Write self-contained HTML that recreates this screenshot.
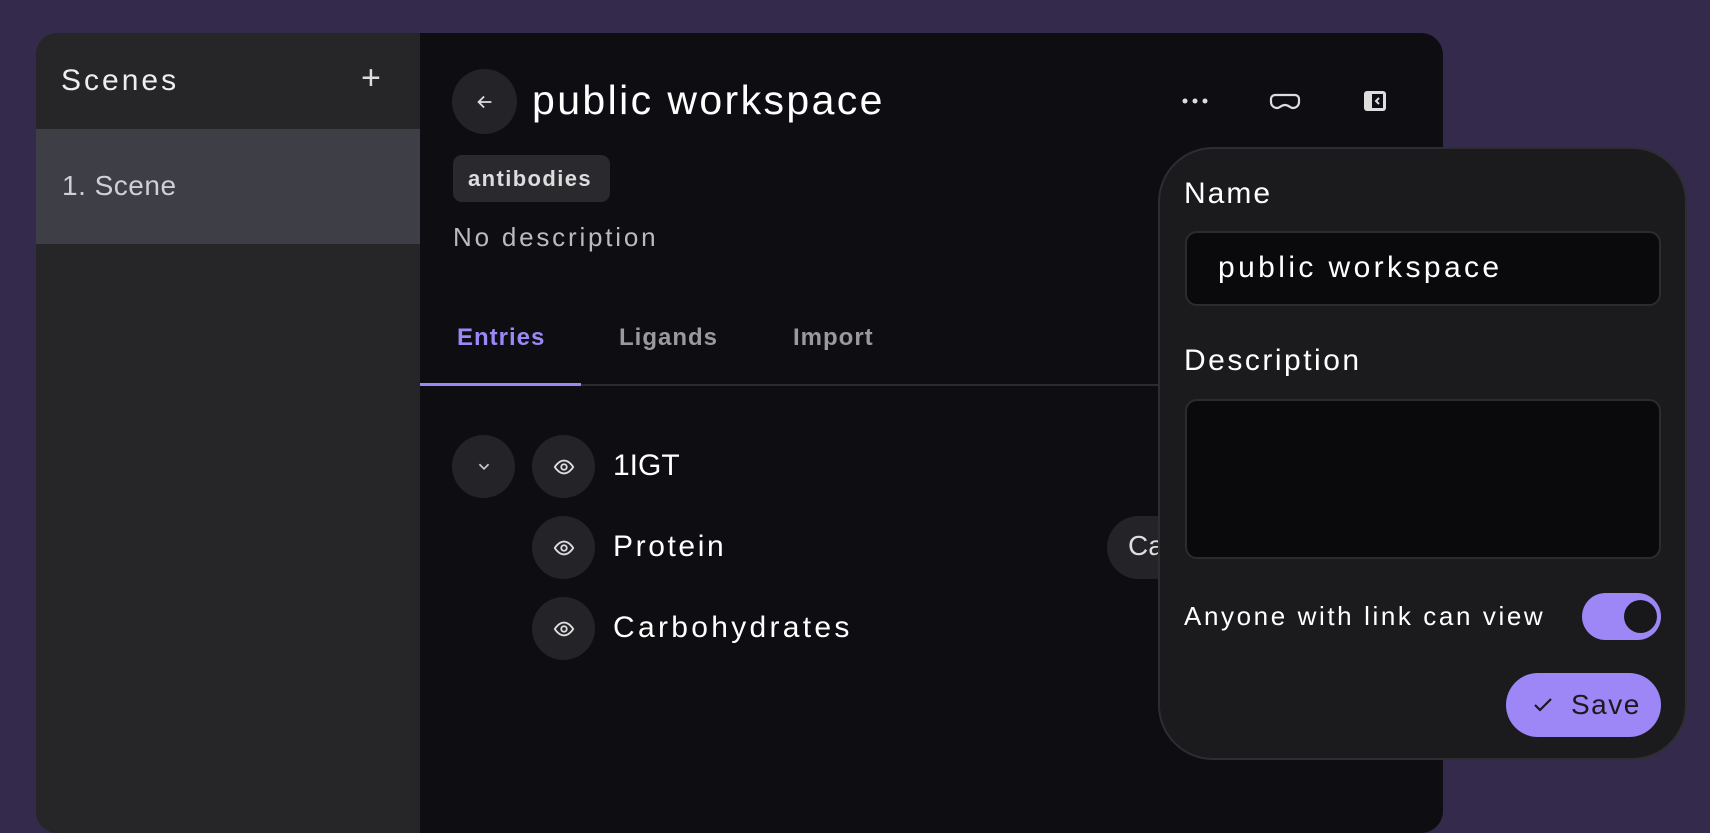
<!DOCTYPE html>
<html><head><meta charset="utf-8"><style>
*{box-sizing:border-box;margin:0;padding:0}
body{width:1710px;height:776px;overflow:hidden;background:#342b4c;font-family:"Liberation Sans",sans-serif;position:relative}
.abs{position:absolute}
.win{left:36px;top:33px;width:1407px;height:800px;border-radius:22px;overflow:hidden;background:#0d0d12}
.side{left:0;top:0;width:384px;height:100%;background:#262628}
.circ{position:absolute;border-radius:50%;background:#242428;display:flex;align-items:center;justify-content:center}
.t{position:absolute;white-space:nowrap}
</style></head><body>
<div class="abs win">
  <div class="abs side">
    <div class="t" style="left:25px;top:31px;font-size:30px;color:#eee;letter-spacing:3px">Scenes</div>
    <div class="t" style="left:325px;top:26px;font-size:34px;color:#ddd;font-weight:300">+</div>
    <div class="abs" style="left:0;top:96px;width:384px;height:115px;background:#3e3e46"></div>
    <div class="t" style="left:26px;top:137px;font-size:28px;color:#d0d0d4;letter-spacing:0.5px">1. Scene</div>
  </div>
  <div class="circ" style="left:416px;top:36px;width:65px;height:65px"><svg width="22" height="22" viewBox="0 0 24 24" fill="none" stroke="#ddd" stroke-width="2"><path d="M19 12H5M11 6l-6 6 6 6"/></svg></div>
  <div class="t" style="left:496px;top:44px;font-size:41px;color:#fff;font-weight:500;letter-spacing:2.4px">public workspace</div>
  <svg class="abs" style="left:1145px;top:63px" width="28" height="10"><circle cx="4" cy="5" r="2.5" fill="#ddd"/><circle cx="14" cy="5" r="2.5" fill="#ddd"/><circle cx="24" cy="5" r="2.5" fill="#ddd"/></svg>
  <svg class="abs" style="left:1233px;top:60px" width="32" height="18" viewBox="0 0 32 18"><path d="M6 2h20a4 4 0 0 1 4 4v3a6 6 0 0 1-6 6c-3 0-4-3-8-3s-5 3-8 3a6 6 0 0 1-6-6V6a4 4 0 0 1 4-4z" fill="none" stroke="#ddd" stroke-width="2.2"/></svg>
  <svg class="abs" style="left:1327px;top:57px" width="24" height="22" viewBox="0 0 24 22"><rect x="1" y="1" width="22" height="20" rx="3" fill="#ddd"/><rect x="9" y="4" width="11" height="14" fill="#0d0d12"/><path d="M16 8l-3 3 3 3" stroke="#ddd" stroke-width="2" fill="none"/></svg>
  <div class="abs" style="left:417px;top:122px;width:157px;height:47px;border-radius:9px;background:#2a2a2e"></div>
  <div class="t" style="left:432px;top:133px;font-size:22px;color:#ddd;font-weight:bold;letter-spacing:1.4px">antibodies</div>
  <div class="t" style="left:417px;top:189px;font-size:26px;color:#bbb;letter-spacing:2.8px">No description</div>
  <div class="t" style="left:421px;top:291px;font-size:24px;color:#9b87f5;font-weight:bold;letter-spacing:1px">Entries</div>
  <div class="t" style="left:583px;top:291px;font-size:24px;color:#9a9a9e;font-weight:bold;letter-spacing:1px">Ligands</div>
  <div class="t" style="left:757px;top:291px;font-size:24px;color:#9a9a9e;font-weight:bold;letter-spacing:1px">Import</div>
  <div class="abs" style="left:384px;top:351px;width:1100px;height:2px;background:#2c2c30"></div>
  <div class="abs" style="left:384px;top:350px;width:161px;height:3px;background:#9b87f5"></div>
  <div class="circ" style="left:416px;top:402px;width:63px;height:63px"><svg width="22" height="22" viewBox="0 0 24 24" fill="none" stroke="#ccc" stroke-width="1.8"><path d="M7 9l5 5 5-5"/></svg></div>
  <div class="circ" style="left:496px;top:402px;width:63px;height:63px"><svg width="22" height="22" viewBox="0 0 24 24" fill="none" stroke="#ddd" stroke-width="2"><path d="M2 12s4-7 10-7 10 7 10 7-4 7-10 7S2 12 2 12z"/><circle cx="12" cy="12" r="3"/></svg></div>
  <div class="t" style="left:577px;top:416px;font-size:30px;color:#fff">1IGT</div>
  <div class="circ" style="left:496px;top:483px;width:63px;height:63px"><svg width="22" height="22" viewBox="0 0 24 24" fill="none" stroke="#ddd" stroke-width="2"><path d="M2 12s4-7 10-7 10 7 10 7-4 7-10 7S2 12 2 12z"/><circle cx="12" cy="12" r="3"/></svg></div>
  <div class="t" style="left:577px;top:497px;font-size:30px;color:#fff;letter-spacing:2.6px">Protein</div>
  <div class="circ" style="left:496px;top:564px;width:63px;height:63px"><svg width="22" height="22" viewBox="0 0 24 24" fill="none" stroke="#ddd" stroke-width="2"><path d="M2 12s4-7 10-7 10 7 10 7-4 7-10 7S2 12 2 12z"/><circle cx="12" cy="12" r="3"/></svg></div>
  <div class="t" style="left:577px;top:578px;font-size:30px;color:#fff;letter-spacing:3.3px">Carbohydrates</div>
  <div class="abs" style="left:1071px;top:483px;width:160px;height:63px;border-radius:32px;background:#242428"></div>
  <div class="t" style="left:1092px;top:497px;font-size:28px;color:#ddd">Ca</div>
</div>
<div class="abs" style="left:1158px;top:147px;width:529px;height:613px;border-radius:55px;background:#1b1b1e;border:2px solid #2e2e32"></div>
<div class="t" style="left:1184px;top:177px;font-size:30px;color:#fff;letter-spacing:2px">Name</div>
<div class="abs" style="left:1185px;top:231px;width:476px;height:75px;border-radius:12px;background:#0a0a0c;border:2px solid #2c2c30"></div>
<div class="t" style="left:1218px;top:251px;font-size:30px;color:#fff;letter-spacing:3.4px">public workspace</div>
<div class="t" style="left:1184px;top:344px;font-size:30px;color:#fff;letter-spacing:2.5px">Description</div>
<div class="abs" style="left:1185px;top:399px;width:476px;height:160px;border-radius:12px;background:#0a0a0c;border:2px solid #2c2c30"></div>
<div class="t" style="left:1184px;top:601px;font-size:26px;color:#fff;letter-spacing:2.6px">Anyone with link can view</div>
<div class="abs" style="left:1582px;top:593px;width:79px;height:47px;border-radius:24px;background:#9d86f5"></div>
<div class="abs" style="left:1624px;top:600px;width:33px;height:33px;border-radius:50%;background:#18181b"></div>
<div class="abs" style="left:1506px;top:673px;width:155px;height:64px;border-radius:32px;background:#9d86f5"></div>
<svg class="abs" style="left:1532px;top:696px" width="22" height="18" viewBox="0 0 22 18"><path d="M3 9l5 5 11-11" fill="none" stroke="#1a1a1e" stroke-width="2.2"/></svg>
<div class="t" style="left:1571px;top:689px;font-size:28px;color:#1a1a1e;letter-spacing:1.5px">Save</div>
</body></html>
